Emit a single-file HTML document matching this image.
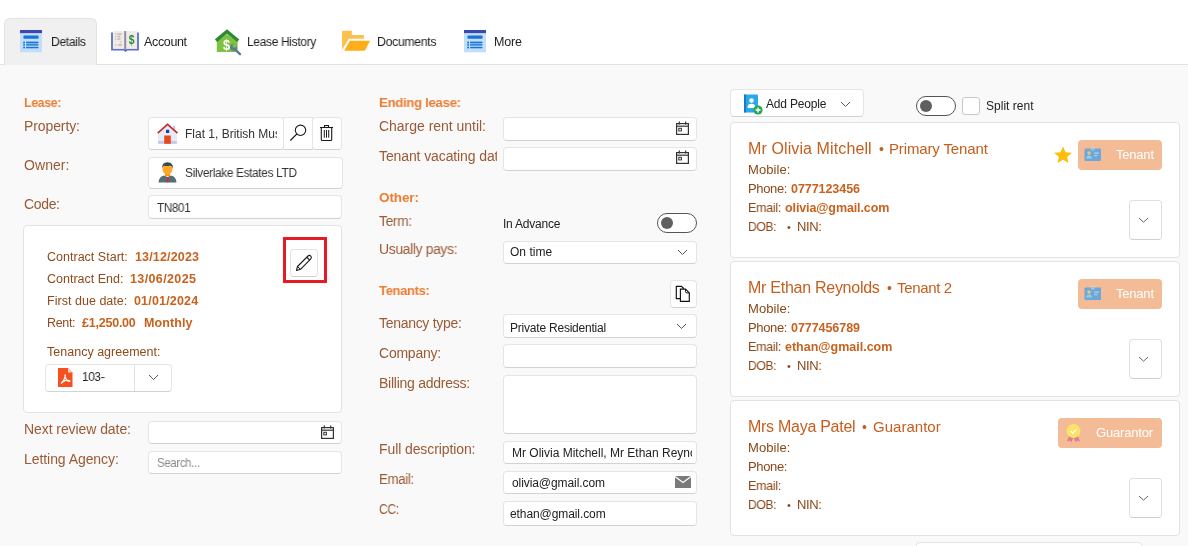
<!DOCTYPE html>
<html><head><meta charset="utf-8"><style>
html,body{margin:0;padding:0;}
body{width:1188px;height:546px;overflow:hidden;position:relative;background:#f9f9f9;font-family:"Liberation Sans", sans-serif;}
div.t{will-change:transform;}
</style></head><body>
<div style="position:absolute;left:0;top:0;width:1188px;height:64px;background:#fff"></div>
<div style="position:absolute;left:0;top:64px;width:1188px;height:1px;background:#e3e3e3"></div>
<div style="position:absolute;left:4px;top:18px;width:93px;height:47px;box-sizing:border-box;background:#f0f0f0;border:1px solid #e3e3e3;border-bottom:none;border-radius:6px 6px 0 0"></div>
<svg style="position:absolute;left:20px;top:30px;will-change:transform" width="22" height="23" viewBox="0 0 22 23"><rect x="0" y="0" width="22" height="22.3" fill="#c2defa"/><rect x="0" y="0" width="22" height="3.1" fill="#3a48b0"/><rect x="3.4" y="5.4" width="15.2" height="3.3" rx="1.2" fill="#1a73d6"/><rect x="3.2" y="11.2" width="14.6" height="7" fill="#9ccaf2"/><rect x="5" y="11" width="1" height="8" fill="#c2defa"/><g fill="#1a73d6"><rect x="3.2" y="11.8" width="1.8" height="1.4"/><rect x="6" y="11.8" width="12.6" height="1.4" rx="0.6"/><rect x="3.2" y="14.2" width="1.8" height="1.4"/><rect x="6" y="14.2" width="12.6" height="1.4" rx="0.6"/><rect x="3.2" y="16.9" width="1.8" height="1.4"/><rect x="6" y="16.9" width="12.6" height="1.4" rx="0.6"/></g></svg>
<svg style="position:absolute;left:464px;top:30px;will-change:transform" width="22" height="23" viewBox="0 0 22 23"><rect x="0" y="0" width="22" height="22.3" fill="#c2defa"/><rect x="0" y="0" width="22" height="3.1" fill="#3a48b0"/><rect x="3.4" y="5.4" width="15.2" height="3.3" rx="1.2" fill="#1a73d6"/><rect x="3.2" y="11.2" width="14.6" height="7" fill="#9ccaf2"/><rect x="5" y="11" width="1" height="8" fill="#c2defa"/><g fill="#1a73d6"><rect x="3.2" y="11.8" width="1.8" height="1.4"/><rect x="6" y="11.8" width="12.6" height="1.4" rx="0.6"/><rect x="3.2" y="14.2" width="1.8" height="1.4"/><rect x="6" y="14.2" width="12.6" height="1.4" rx="0.6"/><rect x="3.2" y="16.9" width="1.8" height="1.4"/><rect x="6" y="16.9" width="12.6" height="1.4" rx="0.6"/></g></svg>
<svg style="position:absolute;left:111px;top:31px;will-change:transform" width="28" height="21" viewBox="0 0 28 21"><path d="M1 1.5 V18.7 H13 L14.5 19.8 L16 18.7 H27 V1.5" fill="none" stroke="#5f6ec8" stroke-width="1.8"/><rect x="2" y="0.1" width="11.2" height="17.4" fill="#efebe7"/><rect x="15.2" y="0.1" width="10.8" height="17.4" fill="#efebe7"/><rect x="13.2" y="0.1" width="2" height="19" fill="#8f8aa6"/><g fill="#c9b3aa"><rect x="4" y="2.3" width="1.2" height="1.2"/><rect x="6.3" y="2.3" width="4.5" height="1.4"/><rect x="4" y="4.8" width="1.2" height="1.2"/><rect x="6.3" y="4.8" width="3.2" height="1.4"/><rect x="4" y="7.3" width="1.2" height="1.2"/><rect x="6.3" y="7.3" width="3.2" height="1.4"/><rect x="8.8" y="10.5" width="1.6" height="1.2"/><rect x="4" y="13.3" width="1.2" height="1.2"/><rect x="7" y="13.3" width="4" height="1.4"/></g><g transform="translate(20.6 0) scale(0.8 1)"><text x="0" y="13.4" font-family="Liberation Sans" font-weight="700" font-size="13" fill="#2a8a3a" text-anchor="middle">$</text></g></svg>
<svg style="position:absolute;left:215px;top:29px;will-change:transform" width="28" height="28" viewBox="0 0 28 28"><path d="M1.8 12.5 L12 5 L22.6 12.5 V23 H1.8Z" fill="#7fc142"/><path d="M1 11.7 L12 2.5 L23.2 11.7" fill="none" stroke="#2e8a30" stroke-width="3.4" stroke-linejoin="miter"/><g transform="translate(11.6 0) scale(0.85 1)"><text x="0" y="21" font-family="Liberation Sans" font-weight="700" font-size="15" fill="#fff" text-anchor="middle">$</text></g><path d="M19.5 19.8 L25 25.2" stroke="#5a7b95" stroke-width="2.4" stroke-linecap="round"/><circle cx="18.5" cy="18.3" r="3.4" fill="#5a7b95"/><path d="M18.6 14.5 L17.2 18 L20.5 18.8 L22.5 15.8Z" fill="#7fc142"/></svg>
<svg style="position:absolute;left:338px;top:27px;will-change:transform" width="36" height="28" viewBox="0 0 36 28"><path d="M4.1 4.5 Q4.1 3.8 4.8 3.8 H13.8 V7.9 H25.2 Q25.9 7.9 25.9 8.6 V11.8 H10.8 L4.1 22.8 Z" fill="#fdbf4d"/><path d="M11.8 13.8 H32 L26.9 23.8 H6.2 Z" fill="#ffae1a"/></svg>
<div style="position:absolute;left:148px;top:117px;width:136px;height:33px;box-sizing:border-box;background:#fff;border:1px solid #e5e5e5;border-bottom-color:#d2d2d2;border-radius:4px;"></div>
<div style="position:absolute;left:283px;top:117px;width:30px;height:33px;box-sizing:border-box;background:#fff;border:1px solid #e5e5e5;border-bottom-color:#d2d2d2;border-radius:0px;"></div>
<div style="position:absolute;left:312px;top:117px;width:30px;height:33px;box-sizing:border-box;background:#fff;border:1px solid #e5e5e5;border-bottom-color:#d2d2d2;border-radius:4px;"></div>
<svg style="position:absolute;left:156px;top:122px;will-change:transform" width="24" height="23" viewBox="0 0 24 23"><path d="M2 11 L11.5 2.5 L20.9 11 V21.8 H2Z" fill="#e8eaf6"/><rect x="2" y="19" width="18.9" height="2.8" fill="#c5cae9"/><rect x="17" y="3.7" width="2.3" height="4" fill="#c5cae9"/><path d="M1.7 11.1 L11.5 2.3 L21.5 11.1" fill="none" stroke="#c62828" stroke-width="1.6"/><rect x="10" y="7.8" width="3.2" height="3.2" fill="#0d47a1"/><rect x="8.2" y="13.5" width="6.6" height="8.3" fill="#e64a19"/></svg>
<svg style="position:absolute;left:288px;top:123px;will-change:transform" width="20" height="20" viewBox="0 0 20 20"><circle cx="12.5" cy="7.3" r="5.2" fill="none" stroke="#1a1a1a" stroke-width="1.1"/><path d="M8.8 11 L2.3 17.5" stroke="#1a1a1a" stroke-width="1.1"/></svg>
<svg style="position:absolute;left:318px;top:123px;will-change:transform" width="18" height="20" viewBox="0 0 18 20"><path d="M2 4.5 H15" stroke="#1a1a1a" stroke-width="1.1"/><path d="M6.5 4.5 V2.5 H10.5 V4.5" fill="none" stroke="#1a1a1a" stroke-width="1.1"/><path d="M3.3 4.5 V16.5 Q3.3 17.5 4.3 17.5 H12.7 Q13.7 17.5 13.7 16.5 V4.5" fill="none" stroke="#1a1a1a" stroke-width="1.1"/><path d="M6.3 7 V14.7 M8.5 7 V14.7 M10.7 7 V14.7" stroke="#1a1a1a" stroke-width="1"/></svg>
<div style="position:absolute;left:148px;top:157px;width:195px;height:32px;box-sizing:border-box;background:#fff;border:1px solid #e5e5e5;border-bottom-color:#d2d2d2;border-radius:4px;"></div>
<svg style="position:absolute;left:157px;top:160px;will-change:transform" width="21" height="24" viewBox="0 0 21 24"><path d="M1.5 22.5 Q2 16.5 7 15.5 L10.5 17 L14 15.5 Q19 16.5 19.5 22.5Z" fill="#546e7a"/><path d="M9.5 17 H11.5 L11.5 22 L10.5 22.5 L9.5 22Z" fill="#d32f2f"/><rect x="8" y="13" width="5" height="3" fill="#ff9800"/><ellipse cx="10.5" cy="9" rx="5" ry="5.8" fill="#ffa726"/><path d="M5.2 8.5 Q4.5 2.5 10.5 2.3 Q16.5 2.5 15.8 8.5 Q15 5.5 13 5.5 Q10 6.5 7 5.5 Q5.8 6 5.2 8.5Z" fill="#37474f"/></svg>
<div style="position:absolute;left:148px;top:195px;width:194px;height:24px;box-sizing:border-box;background:#fff;border:1px solid #e5e5e5;border-bottom-color:#d2d2d2;border-radius:4px;"></div>
<div style="position:absolute;left:23px;top:225px;width:319px;height:188px;box-sizing:border-box;background:#fff;border:1px solid #e3e3e3;border-bottom-color:#e3e3e3;border-radius:4px;"></div>
<div style="position:absolute;left:45px;top:364px;width:127px;height:28px;box-sizing:border-box;background:#fff;border:1px solid #e5e5e5;border-bottom-color:#d2d2d2;border-radius:4px;"></div>
<div style="position:absolute;left:134px;top:365px;width:1px;height:26px;background:#e3e3e3"></div>
<svg style="position:absolute;left:58px;top:368px;will-change:transform" width="15" height="19" viewBox="0 0 15 19"><path d="M0 0 H10 L14.5 4.5 V19 H0Z" fill="#f4511e"/><path d="M10 0 V4.5 H14.5Z" fill="#ffccbc"/><path d="M3 15.5 Q6 13 7.3 8.5 Q7.5 6 7 7 Q6.5 9 9 12.5 Q11.5 14 12 13 Q11 12 7.5 12.5 Q5 13.5 3 15.5Z" fill="none" stroke="#fff" stroke-width="1.1"/></svg>
<svg style="position:absolute;left:148px;top:374px;will-change:transform" width="11" height="7" viewBox="0 0 11 7"><path d="M1 1 L5.5 5.5 L10 1" fill="none" stroke="#555" stroke-width="1"/></svg>
<div style="position:absolute;left:283px;top:237px;width:44px;height:46px;box-sizing:border-box;border:3px solid #e51a23"></div>
<div style="position:absolute;left:290px;top:249px;width:28px;height:28px;box-sizing:border-box;background:#fff;border:1px solid #e3e3e3;border-bottom-color:#cfcfcf;border-radius:4px;"></div>
<svg style="position:absolute;left:294px;top:253px;will-change:transform" width="20" height="20" viewBox="0 0 20 20"><path d="M2.5 17.5 L3.5 13.5 L14 3 Q15.5 1.8 16.8 3.1 Q18 4.5 16.8 5.8 L6.5 16.3Z" fill="none" stroke="#1a1a1a" stroke-width="1.1" stroke-linejoin="round"/><path d="M12.8 4.2 L15.6 7" stroke="#1a1a1a" stroke-width="1.1"/><path d="M3.5 13.5 L6.5 16.3" stroke="#1a1a1a" stroke-width="1"/></svg>
<div style="position:absolute;left:148px;top:421px;width:194px;height:23px;box-sizing:border-box;background:#fff;border:1px solid #e5e5e5;border-bottom-color:#d2d2d2;border-radius:4px;"></div>
<svg style="position:absolute;left:321px;top:425px;will-change:transform" width="13" height="14" viewBox="0 0 13 14"><rect x="0.6" y="2.6" width="11.8" height="10.8" fill="none" stroke="#333" stroke-width="1.2"/><path d="M0.6 5.2 H12.4" stroke="#333" stroke-width="1.2"/><path d="M3.3 0.5 V3.5 M9.7 0.5 V3.5" stroke="#333" stroke-width="1.2"/><rect x="2.8" y="7.3" width="2.6" height="2.6" fill="none" stroke="#333" stroke-width="1"/></svg>
<div style="position:absolute;left:148px;top:451px;width:194px;height:23px;box-sizing:border-box;background:#fff;border:1px solid #e5e5e5;border-bottom-color:#d2d2d2;border-radius:4px;"></div>
<div style="position:absolute;left:503px;top:117px;width:194px;height:24px;box-sizing:border-box;background:#fff;border:1px solid #e5e5e5;border-bottom-color:#d2d2d2;border-radius:4px;"></div>
<svg style="position:absolute;left:676px;top:121px;will-change:transform" width="13" height="14" viewBox="0 0 13 14"><rect x="0.6" y="2.6" width="11.8" height="10.8" fill="none" stroke="#333" stroke-width="1.2"/><path d="M0.6 5.2 H12.4" stroke="#333" stroke-width="1.2"/><path d="M3.3 0.5 V3.5 M9.7 0.5 V3.5" stroke="#333" stroke-width="1.2"/><rect x="2.8" y="7.3" width="2.6" height="2.6" fill="none" stroke="#333" stroke-width="1"/></svg>
<div style="position:absolute;left:503px;top:147px;width:194px;height:24px;box-sizing:border-box;background:#fff;border:1px solid #e5e5e5;border-bottom-color:#d2d2d2;border-radius:4px;"></div>
<svg style="position:absolute;left:676px;top:150px;will-change:transform" width="13" height="14" viewBox="0 0 13 14"><rect x="0.6" y="2.6" width="11.8" height="10.8" fill="none" stroke="#333" stroke-width="1.2"/><path d="M0.6 5.2 H12.4" stroke="#333" stroke-width="1.2"/><path d="M3.3 0.5 V3.5 M9.7 0.5 V3.5" stroke="#333" stroke-width="1.2"/><rect x="2.8" y="7.3" width="2.6" height="2.6" fill="none" stroke="#333" stroke-width="1"/></svg>
<div style="position:absolute;left:657px;top:213px;width:40px;height:20px;box-sizing:border-box;border:1px solid #555;border-radius:10px;background:#fff"></div>
<div style="position:absolute;left:661px;top:217px;width:12px;height:12px;border-radius:6px;background:#5f5f5f"></div>
<div style="position:absolute;left:503px;top:241px;width:194px;height:23px;box-sizing:border-box;background:#fff;border:1px solid #e5e5e5;border-bottom-color:#d2d2d2;border-radius:4px;"></div>
<svg style="position:absolute;left:677px;top:249px;will-change:transform" width="11" height="7" viewBox="0 0 11 7"><path d="M1 1 L5.5 5.5 L10 1" fill="none" stroke="#555" stroke-width="1"/></svg>
<div style="position:absolute;left:670px;top:280px;width:27px;height:28px;box-sizing:border-box;background:#fff;border:1px solid #e5e5e5;border-bottom-color:#d2d2d2;border-radius:4px;"></div>
<svg style="position:absolute;left:674px;top:284px;will-change:transform" width="18" height="20" viewBox="0 0 18 20"><path d="M2.3 2.3 H7.5 L9.3 4.1 V14.6 H2.3Z" fill="#fff" stroke="#111" stroke-width="1.15"/><path d="M6.4 5.1 H11.5 L15.3 8.9 V17.4 H6.4Z" fill="#fff" stroke="#111" stroke-width="1.15"/><path d="M11.5 5.1 V7.5 Q11.5 8.9 12.9 8.9 H15.3" fill="none" stroke="#111" stroke-width="1"/></svg>
<div style="position:absolute;left:503px;top:314px;width:194px;height:24px;box-sizing:border-box;background:#fff;border:1px solid #e5e5e5;border-bottom-color:#d2d2d2;border-radius:4px;"></div>
<svg style="position:absolute;left:676px;top:323px;will-change:transform" width="11" height="7" viewBox="0 0 11 7"><path d="M1 1 L5.5 5.5 L10 1" fill="none" stroke="#555" stroke-width="1"/></svg>
<div style="position:absolute;left:503px;top:344px;width:194px;height:24px;box-sizing:border-box;background:#fff;border:1px solid #e5e5e5;border-bottom-color:#d2d2d2;border-radius:4px;"></div>
<div style="position:absolute;left:503px;top:375px;width:194px;height:59px;box-sizing:border-box;background:#fff;border:1px solid #e5e5e5;border-bottom-color:#d2d2d2;border-radius:4px;"></div>
<div style="position:absolute;left:503px;top:441px;width:194px;height:23px;box-sizing:border-box;background:#fff;border:1px solid #e5e5e5;border-bottom-color:#d2d2d2;border-radius:4px;"></div>
<div style="position:absolute;left:503px;top:471px;width:194px;height:23px;box-sizing:border-box;background:#fff;border:1px solid #e5e5e5;border-bottom-color:#d2d2d2;border-radius:4px;"></div>
<svg style="position:absolute;left:675px;top:476px;will-change:transform" width="16" height="12" viewBox="0 0 16 12"><rect x="0" y="0" width="16" height="12" fill="#7a7a7a"/><path d="M0 0.5 L8 6.5 L16 0.5" fill="none" stroke="#fff" stroke-width="1.2"/></svg>
<div style="position:absolute;left:503px;top:501px;width:194px;height:25px;box-sizing:border-box;background:#fff;border:1px solid #e5e5e5;border-bottom-color:#d2d2d2;border-radius:4px;"></div>
<div style="position:absolute;left:730px;top:89px;width:134px;height:28px;box-sizing:border-box;background:#fff;border:1px solid #e5e5e5;border-bottom-color:#d2d2d2;border-radius:4px;"></div>
<svg style="position:absolute;left:743px;top:94px;will-change:transform" width="21" height="22" viewBox="0 0 21 22"><rect x="1" y="0.5" width="14" height="18" rx="1" fill="#29a8ea"/><rect x="1" y="0.5" width="2" height="18" fill="#1a78c8"/><circle cx="8.5" cy="6.5" r="2.3" fill="#fff"/><path d="M4.5 14 Q4.5 9.8 8.5 9.8 Q12.5 9.8 12.5 14Z" fill="#fff"/><circle cx="15" cy="16" r="4.6" fill="#22a559"/><path d="M15 13.5 V18.5 M12.5 16 H17.5" stroke="#fff" stroke-width="1.4"/></svg>
<svg style="position:absolute;left:840px;top:101px;will-change:transform" width="11" height="7" viewBox="0 0 11 7"><path d="M1 1 L5.5 5.5 L10 1" fill="none" stroke="#555" stroke-width="1"/></svg>
<div style="position:absolute;left:916px;top:96px;width:40px;height:20px;box-sizing:border-box;border:1px solid #555;border-radius:10px;background:#fff"></div>
<div style="position:absolute;left:920px;top:100px;width:12px;height:12px;border-radius:6px;background:#5f5f5f"></div>
<div style="position:absolute;left:962px;top:97px;width:18px;height:18px;box-sizing:border-box;border:1px solid #c8c8c8;border-radius:3px;background:#fff"></div>
<div style="position:absolute;left:730px;top:122px;width:450px;height:136px;box-sizing:border-box;background:#fff;border:1px solid #e3e3e3;border-bottom-color:#e3e3e3;border-radius:4px;"></div>
<div style="position:absolute;left:1078px;top:140px;width:84px;height:30px;border-radius:4px;background:#f4bb97"></div>
<svg style="position:absolute;left:1084px;top:146px;will-change:transform" width="18" height="16" viewBox="0 0 18 16"><rect x="0.5" y="2.5" width="16.5" height="12.5" rx="1" fill="#6fa6d8"/><circle cx="8.8" cy="2.5" r="1.6" fill="none" stroke="#cfd8dc" stroke-width="0.9"/><circle cx="5" cy="7" r="1.8" fill="#f6c26b"/><path d="M2 12.5 Q2.5 9.5 5 9.5 Q7.5 9.5 8 12.5Z" fill="#8ed0f0"/><rect x="10" y="6.5" width="5" height="1.3" fill="#9fd3f3"/><rect x="10" y="9" width="3.5" height="1.2" fill="#9fd3f3"/></svg>
<svg style="position:absolute;left:1053px;top:146px;will-change:transform" width="20" height="18" viewBox="0 0 20 18"><path d="M10 0.5 L12.6 6.2 L18.8 6.8 L14.1 10.9 L15.5 17 L10 13.8 L4.5 17 L5.9 10.9 L1.2 6.8 L7.4 6.2Z" fill="#fbbf0c"/></svg>
<div style="position:absolute;left:1129px;top:200px;width:33px;height:40px;box-sizing:border-box;background:#fff;border:1px solid #e0e0e0;border-bottom-color:#cfcfcf;border-radius:4px;"></div>
<svg style="position:absolute;left:1138px;top:217px;will-change:transform" width="11" height="7" viewBox="0 0 11 7"><path d="M1 1 L5.5 5.2 L10 1" fill="none" stroke="#666" stroke-width="1"/></svg>
<div style="position:absolute;left:730px;top:261px;width:450px;height:136px;box-sizing:border-box;background:#fff;border:1px solid #e3e3e3;border-bottom-color:#e3e3e3;border-radius:4px;"></div>
<div style="position:absolute;left:1078px;top:279px;width:84px;height:30px;border-radius:4px;background:#f4bb97"></div>
<svg style="position:absolute;left:1084px;top:285px;will-change:transform" width="18" height="16" viewBox="0 0 18 16"><rect x="0.5" y="2.5" width="16.5" height="12.5" rx="1" fill="#6fa6d8"/><circle cx="8.8" cy="2.5" r="1.6" fill="none" stroke="#cfd8dc" stroke-width="0.9"/><circle cx="5" cy="7" r="1.8" fill="#f6c26b"/><path d="M2 12.5 Q2.5 9.5 5 9.5 Q7.5 9.5 8 12.5Z" fill="#8ed0f0"/><rect x="10" y="6.5" width="5" height="1.3" fill="#9fd3f3"/><rect x="10" y="9" width="3.5" height="1.2" fill="#9fd3f3"/></svg>
<div style="position:absolute;left:1129px;top:339px;width:33px;height:40px;box-sizing:border-box;background:#fff;border:1px solid #e0e0e0;border-bottom-color:#cfcfcf;border-radius:4px;"></div>
<svg style="position:absolute;left:1138px;top:356px;will-change:transform" width="11" height="7" viewBox="0 0 11 7"><path d="M1 1 L5.5 5.2 L10 1" fill="none" stroke="#666" stroke-width="1"/></svg>
<div style="position:absolute;left:730px;top:400px;width:450px;height:136px;box-sizing:border-box;background:#fff;border:1px solid #e3e3e3;border-bottom-color:#e3e3e3;border-radius:4px;"></div>
<div style="position:absolute;left:1058px;top:418px;width:104px;height:30px;border-radius:4px;background:#f4bb97"></div>
<svg style="position:absolute;left:1065px;top:423px;will-change:transform" width="17" height="20" viewBox="0 0 17 20"><path d="M4.5 12 L2 18.5 L5.2 17.5 L6.3 19.5 L8.5 14Z M12.5 12 L15 18.5 L11.8 17.5 L10.7 19.5 L8.5 14Z" fill="#de7d91"/><circle cx="8.5" cy="8" r="7" fill="#fde26a"/><path d="M5.7 8.3 L7.8 10.1 L11.4 6.4" fill="none" stroke="#fff" stroke-width="1.2"/></svg>
<div style="position:absolute;left:1129px;top:478px;width:33px;height:40px;box-sizing:border-box;background:#fff;border:1px solid #e0e0e0;border-bottom-color:#cfcfcf;border-radius:4px;"></div>
<svg style="position:absolute;left:1138px;top:495px;will-change:transform" width="11" height="7" viewBox="0 0 11 7"><path d="M1 1 L5.5 5.2 L10 1" fill="none" stroke="#666" stroke-width="1"/></svg>
<div style="position:absolute;left:916px;top:542px;width:226px;height:18px;box-sizing:border-box;background:#fff;border:1px solid #e5e5e5;border-bottom-color:#d2d2d2;border-radius:4px;"></div>
<div class="t" style="position:absolute;left:50.5px;top:36.00px;font-size:12.5px;line-height:12.5px;font-weight:400;color:#1e1e1e;white-space:nowrap;letter-spacing:-0.350px;transform:scaleX(0.9693);transform-origin:0 0;">Details</div>
<div class="t" style="position:absolute;left:144.4px;top:36.00px;font-size:12.5px;line-height:12.5px;font-weight:400;color:#1e1e1e;white-space:nowrap;letter-spacing:-0.350px;transform:scaleX(0.9985);transform-origin:0 0;">Account</div>
<div class="t" style="position:absolute;left:246.5px;top:36.00px;font-size:12.5px;line-height:12.5px;font-weight:400;color:#1e1e1e;white-space:nowrap;letter-spacing:-0.350px;transform:scaleX(0.9595);transform-origin:0 0;">Lease History</div>
<div class="t" style="position:absolute;left:376.5px;top:36.00px;font-size:12.5px;line-height:12.5px;font-weight:400;color:#1e1e1e;white-space:nowrap;letter-spacing:-0.350px;transform:scaleX(0.9848);transform-origin:0 0;">Documents</div>
<div class="t" style="position:absolute;left:494.0px;top:36.00px;font-size:12.5px;line-height:12.5px;font-weight:400;color:#1e1e1e;white-space:nowrap;letter-spacing:-0.160px;">More</div>
<div class="t" style="position:absolute;left:23.6px;top:96.00px;font-size:13.5px;line-height:13.5px;font-weight:700;color:#ed7d31;white-space:nowrap;letter-spacing:-0.350px;transform:scaleX(0.9117);transform-origin:0 0;">Lease:</div>
<div class="t" style="position:absolute;left:23.6px;top:119.00px;font-size:14px;line-height:14px;font-weight:400;color:#9a5a35;white-space:nowrap;letter-spacing:-0.100px;">Property:</div>
<div class="t" style="position:absolute;left:23.6px;top:158.00px;font-size:14px;line-height:14px;font-weight:400;color:#9a5a35;white-space:nowrap;letter-spacing:0.075px;">Owner:</div>
<div class="t" style="position:absolute;left:23.6px;top:197.00px;font-size:14px;line-height:14px;font-weight:400;color:#9a5a35;white-space:nowrap;letter-spacing:-0.350px;transform:scaleX(0.9984);transform-origin:0 0;">Code:</div>
<div class="t" style="position:absolute;left:23.6px;top:422.00px;font-size:14px;line-height:14px;font-weight:400;color:#9a5a35;white-space:nowrap;letter-spacing:-0.072px;">Next review date:</div>
<div class="t" style="position:absolute;left:23.6px;top:452.00px;font-size:14px;line-height:14px;font-weight:400;color:#9a5a35;white-space:nowrap;letter-spacing:-0.065px;">Letting Agency:</div>
<div class="t" style="position:absolute;left:185.3px;top:128.00px;font-size:12px;line-height:12px;font-weight:400;color:#333;white-space:nowrap;width:92px;overflow:hidden;white-space:nowrap;height:20px;">Flat 1, British Museum</div>
<div class="t" style="position:absolute;left:185.0px;top:167.00px;font-size:12px;line-height:12px;font-weight:400;color:#333;white-space:nowrap;letter-spacing:-0.350px;transform:scaleX(0.9900);transform-origin:0 0;">Silverlake Estates LTD</div>
<div class="t" style="position:absolute;left:157.3px;top:202.00px;font-size:12px;line-height:12px;font-weight:400;color:#333;white-space:nowrap;letter-spacing:-0.350px;transform:scaleX(0.9735);transform-origin:0 0;">TN801</div>
<div class="t" style="position:absolute;left:47.3px;top:251.00px;font-size:12.5px;line-height:12.5px;font-weight:400;color:#8f4a1c;white-space:nowrap;letter-spacing:0.015px;">Contract Start:</div>
<div class="t" style="position:absolute;left:135.0px;top:251.00px;font-size:12.5px;line-height:12.5px;font-weight:700;color:#c8621e;white-space:nowrap;letter-spacing:0.160px;">13/12/2023</div>
<div class="t" style="position:absolute;left:47.3px;top:273.00px;font-size:12.5px;line-height:12.5px;font-weight:400;color:#8f4a1c;white-space:nowrap;">Contract End:</div>
<div class="t" style="position:absolute;left:130.0px;top:273.00px;font-size:12.5px;line-height:12.5px;font-weight:700;color:#c8621e;white-space:nowrap;letter-spacing:0.350px;transform:scaleX(1.0044);transform-origin:0 0;">13/06/2025</div>
<div class="t" style="position:absolute;left:47.3px;top:295.00px;font-size:12.5px;line-height:12.5px;font-weight:400;color:#8f4a1c;white-space:nowrap;letter-spacing:0.028px;">First due date:</div>
<div class="t" style="position:absolute;left:134.3px;top:295.00px;font-size:12.5px;line-height:12.5px;font-weight:700;color:#c8621e;white-space:nowrap;letter-spacing:0.171px;">01/01/2024</div>
<div class="t" style="position:absolute;left:47.3px;top:317.00px;font-size:12.5px;line-height:12.5px;font-weight:400;color:#8f4a1c;white-space:nowrap;letter-spacing:-0.350px;transform:scaleX(0.9903);transform-origin:0 0;">Rent:</div>
<div class="t" style="position:absolute;left:82.3px;top:317.00px;font-size:12.5px;line-height:12.5px;font-weight:700;color:#c8621e;white-space:nowrap;letter-spacing:-0.226px;">£1,250.00</div>
<div class="t" style="position:absolute;left:143.7px;top:317.00px;font-size:12.5px;line-height:12.5px;font-weight:700;color:#c8621e;white-space:nowrap;letter-spacing:0.099px;">Monthly</div>
<div class="t" style="position:absolute;left:47.3px;top:346.00px;font-size:12.5px;line-height:12.5px;font-weight:400;color:#8f4a1c;white-space:nowrap;letter-spacing:0.014px;">Tenancy agreement:</div>
<div class="t" style="position:absolute;left:82.0px;top:370.00px;font-size:13px;line-height:13px;font-weight:400;color:#222;white-space:nowrap;letter-spacing:-0.350px;transform:scaleX(0.9011);transform-origin:0 0;">103-</div>
<div class="t" style="position:absolute;left:157.0px;top:457.00px;font-size:12px;line-height:12px;font-weight:400;color:#8a8a8a;white-space:nowrap;letter-spacing:-0.350px;transform:scaleX(0.9508);transform-origin:0 0;">Search...</div>
<div class="t" style="position:absolute;left:378.8px;top:96.00px;font-size:13.5px;line-height:13.5px;font-weight:700;color:#ed7d31;white-space:nowrap;letter-spacing:-0.350px;transform:scaleX(0.9812);transform-origin:0 0;">Ending lease:</div>
<div class="t" style="position:absolute;left:378.8px;top:119.00px;font-size:14px;line-height:14px;font-weight:400;color:#9a5a35;white-space:nowrap;letter-spacing:-0.023px;">Charge rent until:</div>
<div class="t" style="position:absolute;left:378.8px;top:149.00px;font-size:14px;line-height:14px;font-weight:400;color:#9a5a35;white-space:nowrap;letter-spacing:-0.107px;width:118px;overflow:hidden;white-space:nowrap;height:20px;">Tenant vacating dat</div>
<div class="t" style="position:absolute;left:378.8px;top:191.00px;font-size:13.5px;line-height:13.5px;font-weight:700;color:#ed7d31;white-space:nowrap;letter-spacing:-0.100px;">Other:</div>
<div class="t" style="position:absolute;left:378.8px;top:214.00px;font-size:14px;line-height:14px;font-weight:400;color:#9a5a35;white-space:nowrap;letter-spacing:-0.350px;transform:scaleX(0.9821);transform-origin:0 0;">Term:</div>
<div class="t" style="position:absolute;left:503.0px;top:218.00px;font-size:12px;line-height:12px;font-weight:400;color:#222;white-space:nowrap;letter-spacing:-0.227px;">In Advance</div>
<div class="t" style="position:absolute;left:378.8px;top:242.00px;font-size:14px;line-height:14px;font-weight:400;color:#9a5a35;white-space:nowrap;letter-spacing:-0.350px;transform:scaleX(0.9930);transform-origin:0 0;">Usually pays:</div>
<div class="t" style="position:absolute;left:510.2px;top:246.00px;font-size:12px;line-height:12px;font-weight:400;color:#222;white-space:nowrap;letter-spacing:0.031px;">On time</div>
<div class="t" style="position:absolute;left:378.8px;top:284.00px;font-size:13.5px;line-height:13.5px;font-weight:700;color:#ed7d31;white-space:nowrap;letter-spacing:-0.350px;transform:scaleX(0.9621);transform-origin:0 0;">Tenants:</div>
<div class="t" style="position:absolute;left:378.8px;top:316.00px;font-size:14px;line-height:14px;font-weight:400;color:#9a5a35;white-space:nowrap;letter-spacing:-0.299px;">Tenancy type:</div>
<div class="t" style="position:absolute;left:510.0px;top:322.00px;font-size:12px;line-height:12px;font-weight:400;color:#222;white-space:nowrap;letter-spacing:-0.214px;">Private Residential</div>
<div class="t" style="position:absolute;left:378.8px;top:346.00px;font-size:14px;line-height:14px;font-weight:400;color:#9a5a35;white-space:nowrap;letter-spacing:-0.230px;">Company:</div>
<div class="t" style="position:absolute;left:378.8px;top:376.00px;font-size:14px;line-height:14px;font-weight:400;color:#9a5a35;white-space:nowrap;letter-spacing:-0.249px;">Billing address:</div>
<div class="t" style="position:absolute;left:378.8px;top:442.00px;font-size:14px;line-height:14px;font-weight:400;color:#9a5a35;white-space:nowrap;letter-spacing:-0.096px;">Full description:</div>
<div class="t" style="position:absolute;left:512.4px;top:447.00px;font-size:12px;line-height:12px;font-weight:400;color:#222;white-space:nowrap;width:180px;overflow:hidden;white-space:nowrap;height:20px;">Mr Olivia Mitchell, Mr Ethan Reynolds</div>
<div class="t" style="position:absolute;left:378.8px;top:472.00px;font-size:14px;line-height:14px;font-weight:400;color:#9a5a35;white-space:nowrap;letter-spacing:-0.350px;transform:scaleX(0.9476);transform-origin:0 0;">Email:</div>
<div class="t" style="position:absolute;left:512.0px;top:477.00px;font-size:12px;line-height:12px;font-weight:400;color:#222;white-space:nowrap;letter-spacing:-0.080px;">olivia@gmail.com</div>
<div class="t" style="position:absolute;left:378.8px;top:502.00px;font-size:14px;line-height:14px;font-weight:400;color:#9a5a35;white-space:nowrap;letter-spacing:-0.350px;transform:scaleX(0.8629);transform-origin:0 0;">CC:</div>
<div class="t" style="position:absolute;left:510.3px;top:508.00px;font-size:12px;line-height:12px;font-weight:400;color:#222;white-space:nowrap;letter-spacing:-0.085px;">ethan@gmail.com</div>
<div class="t" style="position:absolute;left:766.3px;top:98.00px;font-size:12px;line-height:12px;font-weight:400;color:#222;white-space:nowrap;letter-spacing:-0.183px;">Add People</div>
<div class="t" style="position:absolute;left:986.3px;top:100.00px;font-size:12px;line-height:12px;font-weight:400;color:#222;white-space:nowrap;letter-spacing:0.016px;">Split rent</div>
<div class="t" style="position:absolute;left:748.4px;top:141.00px;font-size:16px;line-height:16px;font-weight:400;color:#c55e1e;white-space:nowrap;letter-spacing:0.107px;">Mr Olivia Mitchell</div>
<div class="t" style="position:absolute;left:878.9px;top:142.00px;font-size:14px;line-height:14px;font-weight:400;color:#c55e1e;white-space:nowrap;">•</div>
<div class="t" style="position:absolute;left:889.4px;top:141.00px;font-size:15px;line-height:15px;font-weight:400;color:#c55e1e;white-space:nowrap;letter-spacing:-0.136px;">Primary Tenant</div>
<div class="t" style="position:absolute;left:748.4px;top:163.00px;font-size:13px;line-height:13px;font-weight:400;color:#8a4818;white-space:nowrap;letter-spacing:0.082px;">Mobile:</div>
<div class="t" style="position:absolute;left:748.4px;top:182.00px;font-size:13px;line-height:13px;font-weight:400;color:#8a4818;white-space:nowrap;letter-spacing:-0.350px;transform:scaleX(0.9885);transform-origin:0 0;">Phone:</div>
<div class="t" style="position:absolute;left:791.3px;top:183.00px;font-size:12.5px;line-height:12.5px;font-weight:700;color:#c8621e;white-space:nowrap;letter-spacing:-0.058px;">0777123456</div>
<div class="t" style="position:absolute;left:748.4px;top:201.00px;font-size:13px;line-height:13px;font-weight:400;color:#8a4818;white-space:nowrap;letter-spacing:-0.350px;transform:scaleX(0.9689);transform-origin:0 0;">Email:</div>
<div class="t" style="position:absolute;left:785.4px;top:202.00px;font-size:12.5px;line-height:12.5px;font-weight:700;color:#c8621e;white-space:nowrap;letter-spacing:-0.111px;">olivia@gmail.com</div>
<div class="t" style="position:absolute;left:748.4px;top:220.00px;font-size:13px;line-height:13px;font-weight:400;color:#8a4818;white-space:nowrap;letter-spacing:-0.350px;transform:scaleX(0.9306);transform-origin:0 0;">DOB:</div>
<div class="t" style="position:absolute;left:787.0px;top:222.00px;font-size:11px;line-height:11px;font-weight:400;color:#8a4818;white-space:nowrap;">•</div>
<div class="t" style="position:absolute;left:796.5px;top:220.00px;font-size:13px;line-height:13px;font-weight:400;color:#8a4818;white-space:nowrap;letter-spacing:-0.350px;transform:scaleX(0.9940);transform-origin:0 0;">NIN:</div>
<div class="t" style="position:absolute;left:1116.0px;top:148.00px;font-size:13px;line-height:13px;font-weight:400;color:#fff;white-space:nowrap;letter-spacing:-0.206px;">Tenant</div>
<div class="t" style="position:absolute;left:748.4px;top:280.00px;font-size:16px;line-height:16px;font-weight:400;color:#c55e1e;white-space:nowrap;letter-spacing:-0.266px;">Mr Ethan Reynolds</div>
<div class="t" style="position:absolute;left:886.8px;top:281.00px;font-size:14px;line-height:14px;font-weight:400;color:#c55e1e;white-space:nowrap;">•</div>
<div class="t" style="position:absolute;left:897.3px;top:280.00px;font-size:15px;line-height:15px;font-weight:400;color:#c55e1e;white-space:nowrap;letter-spacing:-0.335px;">Tenant 2</div>
<div class="t" style="position:absolute;left:748.4px;top:302.00px;font-size:13px;line-height:13px;font-weight:400;color:#8a4818;white-space:nowrap;letter-spacing:0.082px;">Mobile:</div>
<div class="t" style="position:absolute;left:748.4px;top:321.00px;font-size:13px;line-height:13px;font-weight:400;color:#8a4818;white-space:nowrap;letter-spacing:-0.350px;transform:scaleX(0.9885);transform-origin:0 0;">Phone:</div>
<div class="t" style="position:absolute;left:791.3px;top:322.00px;font-size:12.5px;line-height:12.5px;font-weight:700;color:#c8621e;white-space:nowrap;letter-spacing:-0.058px;">0777456789</div>
<div class="t" style="position:absolute;left:748.4px;top:340.00px;font-size:13px;line-height:13px;font-weight:400;color:#8a4818;white-space:nowrap;letter-spacing:-0.350px;transform:scaleX(0.9689);transform-origin:0 0;">Email:</div>
<div class="t" style="position:absolute;left:785.4px;top:341.00px;font-size:12.5px;line-height:12.5px;font-weight:700;color:#c8621e;white-space:nowrap;">ethan@gmail.com</div>
<div class="t" style="position:absolute;left:748.4px;top:359.00px;font-size:13px;line-height:13px;font-weight:400;color:#8a4818;white-space:nowrap;letter-spacing:-0.350px;transform:scaleX(0.9306);transform-origin:0 0;">DOB:</div>
<div class="t" style="position:absolute;left:787.0px;top:361.00px;font-size:11px;line-height:11px;font-weight:400;color:#8a4818;white-space:nowrap;">•</div>
<div class="t" style="position:absolute;left:796.5px;top:359.00px;font-size:13px;line-height:13px;font-weight:400;color:#8a4818;white-space:nowrap;letter-spacing:-0.350px;transform:scaleX(0.9940);transform-origin:0 0;">NIN:</div>
<div class="t" style="position:absolute;left:1116.0px;top:287.00px;font-size:13px;line-height:13px;font-weight:400;color:#fff;white-space:nowrap;letter-spacing:-0.206px;">Tenant</div>
<div class="t" style="position:absolute;left:748.4px;top:419.00px;font-size:16px;line-height:16px;font-weight:400;color:#c55e1e;white-space:nowrap;letter-spacing:-0.272px;">Mrs Maya Patel</div>
<div class="t" style="position:absolute;left:862.4px;top:420.00px;font-size:14px;line-height:14px;font-weight:400;color:#c55e1e;white-space:nowrap;">•</div>
<div class="t" style="position:absolute;left:872.9px;top:419.00px;font-size:15px;line-height:15px;font-weight:400;color:#c55e1e;white-space:nowrap;letter-spacing:0.020px;">Guarantor</div>
<div class="t" style="position:absolute;left:748.4px;top:441.00px;font-size:13px;line-height:13px;font-weight:400;color:#8a4818;white-space:nowrap;letter-spacing:0.082px;">Mobile:</div>
<div class="t" style="position:absolute;left:748.4px;top:460.00px;font-size:13px;line-height:13px;font-weight:400;color:#8a4818;white-space:nowrap;letter-spacing:-0.350px;transform:scaleX(0.9885);transform-origin:0 0;">Phone:</div>
<div class="t" style="position:absolute;left:748.4px;top:479.00px;font-size:13px;line-height:13px;font-weight:400;color:#8a4818;white-space:nowrap;letter-spacing:-0.350px;transform:scaleX(0.9689);transform-origin:0 0;">Email:</div>
<div class="t" style="position:absolute;left:748.4px;top:498.00px;font-size:13px;line-height:13px;font-weight:400;color:#8a4818;white-space:nowrap;letter-spacing:-0.350px;transform:scaleX(0.9306);transform-origin:0 0;">DOB:</div>
<div class="t" style="position:absolute;left:787.0px;top:500.00px;font-size:11px;line-height:11px;font-weight:400;color:#8a4818;white-space:nowrap;">•</div>
<div class="t" style="position:absolute;left:796.5px;top:498.00px;font-size:13px;line-height:13px;font-weight:400;color:#8a4818;white-space:nowrap;letter-spacing:-0.350px;transform:scaleX(0.9940);transform-origin:0 0;">NIN:</div>
<div class="t" style="position:absolute;left:1096.2px;top:426.00px;font-size:13px;line-height:13px;font-weight:400;color:#fff;white-space:nowrap;letter-spacing:-0.166px;">Guarantor</div>
<div class="t" style="position:absolute;left:732.5px;top:544.00px;font-size:13px;line-height:13px;font-weight:400;color:#8a4818;white-space:nowrap;letter-spacing:-0.350px;transform:scaleX(0.8703);transform-origin:0 0;">How do they pay?</div>
</body></html>
